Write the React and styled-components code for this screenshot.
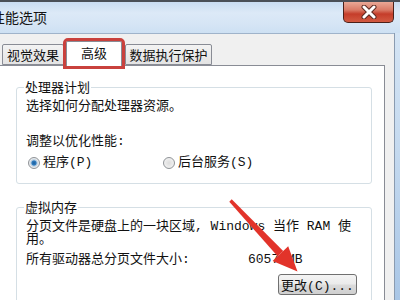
import React from 'react';
import styled, { createGlobalStyle } from 'styled-components';

const GlobalStyle = createGlobalStyle`
  html, body {
    margin: 0;
    padding: 0;
    background: #f0f0f0;
  }
  body {
    font-family: "Liberation Mono", "Noto Sans CJK SC", monospace;
    font-size: 13px;
    color: #111;
  }
`;

const App = () => {
  return (
    <Window>
      <GlobalStyle />
      <TitleBar>
        <Title>性能选项</Title>
        <CloseButton>
          <svg width="20" height="14" viewBox="0 0 20 14">
            <path
              d="M5 2 L15 12 M15 2 L5 12"
              stroke="#5b2a22"
              strokeWidth="5"
              strokeLinecap="round"
            />
            <path
              d="M5 2 L15 12 M15 2 L5 12"
              stroke="#ffffff"
              strokeWidth="3"
              strokeLinecap="round"
            />
          </svg>
        </CloseButton>
      </TitleBar>

      <Body>
        <Client>
          <TabRow>
            <Tab $width={62}>视觉效果</Tab>
            <Tab $width={56} $active>高级</Tab>
            <Tab $width={87} $gap={3}>数据执行保护</Tab>
          </TabRow>

          <Panel>
            <Group>
              <Legend>处理器计划</Legend>
              <Line $top={5}>选择如何分配处理器资源。</Line>
              <Line $top={20}>调整以优化性能:</Line>
              <RadioRow>
                <RadioItem $pad={2}>
                  <Radio $checked />
                  程序(P)
                </RadioItem>
                <RadioItem>
                  <Radio />
                  后台服务(S)
                </RadioItem>
              </RadioRow>
            </Group>

            <Group $top={16}>
              <Legend>虚拟内存</Legend>
              <Paragraph $top={6}>分页文件是硬盘上的一块区域, Windows 当作 RAM 使</Paragraph>
              <Paragraph>用。</Paragraph>
              <SizeRow>
                <span>所有驱动器总分页文件大小:</span>
                <span>6057 MB</span>
              </SizeRow>
              <ButtonRow>
                <Button>更改(C)...</Button>
              </ButtonRow>
            </Group>
          </Panel>
        </Client>
        <RightFrame />
      </Body>

      {/* red annotation arrow drawn over the dialog */}
      <Overlay width="400" height="300" viewBox="0 0 400 300">
        <polygon
          points="229.3,201.7 231.7,199.3 283.2,251 277.6,256.2"
          fill="#e2332a"
        />
        <polygon points="272.6,261 288.2,246.2 297.5,271.5" fill="#e2332a" />
      </Overlay>
    </Window>
  );
};

export default App;

const Window = styled.div`
  position: relative;
  width: 400px;
  height: 300px;
  display: flex;
  flex-direction: column;
  overflow: hidden;
  background: #cfe0f2;
`;

const TitleBar = styled.div`
  box-sizing: border-box;
  height: 33px;
  flex-shrink: 0;
  display: flex;
  justify-content: space-between;
  align-items: flex-start;
  border-top: 2px solid #4a4f57;
  background: linear-gradient(
    to bottom,
    #c9dcf1 0%,
    #dce9f7 35%,
    #d6e5f5 70%,
    #cde0f3 100%
  );
`;

const Title = styled.div`
  margin-left: -9px;
  margin-top: 7px;
  font-family: "Noto Sans CJK SC", sans-serif;
  font-size: 14px;
  line-height: 16px;
  color: #151515;
`;

const CloseButton = styled.div`
  box-sizing: border-box;
  width: 51px;
  height: 21px;
  margin-right: 6px;
  display: flex;
  align-items: center;
  justify-content: center;
  border: 1px solid #4b2019;
  border-top: none;
  border-radius: 0 0 5px 5px;
  background: linear-gradient(
    to bottom,
    #e9a896 0%,
    #d97a66 40%,
    #c53d2a 60%,
    #d25a42 100%
  );
`;

const Body = styled.div`
  flex: 1;
  display: flex;
  min-height: 0;
`;

const Client = styled.div`
  width: 394px;
  display: flex;
  flex-direction: column;
  background: #f0f0f0;
  border-top: 1px solid #9fb3ca;
`;

const RightFrame = styled.div`
  flex: 1;
  border-left: 1px solid #8a9bb0;
  background: linear-gradient(to bottom, #d4e4f4 0%, #c4d9ef 45%, #a9c6e6 100%);
`;

const TabRow = styled.div`
  display: flex;
  align-items: flex-end;
  height: 24px;
  margin-top: 7px;
  padding-left: 2px;
`;

const Tab = styled.div`
  position: relative;
  box-sizing: border-box;
  width: ${(p) => p.$width}px;
  height: ${(p) => (p.$active ? 25 : 21)}px;
  margin-left: ${(p) => (p.$active ? 2 : p.$gap || 0)}px;
  margin-bottom: ${(p) => (p.$active ? -1 : 0)}px;
  display: flex;
  align-items: center;
  justify-content: center;
  padding-bottom: ${(p) => (p.$active ? 3 : 0)}px;
  border: 1px solid #898c95;
  border-bottom: ${(p) => (p.$active ? 'none' : '1px solid #898c95')};
  border-radius: 2px 2px 0 0;
  background: ${(p) =>
    p.$active ? '#ffffff' : 'linear-gradient(to bottom, #f3f3f3, #e3e3e3)'};
  font-family: "Noto Sans CJK SC", sans-serif;
  font-size: 13px;
  white-space: nowrap;
  z-index: ${(p) => (p.$active ? 2 : 0)};
  outline: ${(p) => (p.$active ? '3px solid #c9413d' : 'none')};
`;

const Panel = styled.div`
  flex: 1;
  margin-left: -2px;
  margin-right: 9px;
  padding: 14px 12px 0 17px;
  background: #ffffff;
  border: 1px solid #898c95;
  border-bottom: none;
`;

const Group = styled.fieldset`
  margin: ${(p) => p.$top || 0}px 0 0 0;
  padding: 0 0 13px 9px;
  border: 1px solid #d5dfe5;
  border-radius: 3px;
  min-width: 0;
`;

const Legend = styled.legend`
  margin-left: -2px;
  padding: 0 1px;
  line-height: 14px;
  font-family: "Noto Sans CJK SC", sans-serif;
  font-size: 13px;
`;

const Line = styled.div`
  margin-top: ${(p) => p.$top}px;
  line-height: 15px;
`;

const RadioRow = styled.div`
  display: grid;
  grid-template-columns: 137px auto;
  margin-top: 6px;
  line-height: 15px;
`;

const RadioItem = styled.div`
  display: flex;
  align-items: center;
  gap: 3px;
  padding-left: ${(p) => p.$pad || 0}px;
`;

const Radio = styled.span`
  box-sizing: border-box;
  width: 12px;
  height: 12px;
  border-radius: 50%;
  border: 1px solid #8f9397;
  background: ${(p) =>
    p.$checked
      ? 'radial-gradient(circle, #1c5d98 0%, #2f7cc0 30%, #a9c5dd 42%, #e6e9ec 60%, #f4f4f4 100%)'
      : 'radial-gradient(circle, #dcdcdc 0%, #ececec 55%, #f7f7f7 100%)'};
`;

const Paragraph = styled.div`
  margin-top: ${(p) => p.$top || 0}px;
  height: 13px;
  line-height: 13px;
  white-space: nowrap;
`;

const SizeRow = styled.div`
  display: grid;
  grid-template-columns: 222px auto;
  margin-top: 7px;
  line-height: 13px;
`;

const ButtonRow = styled.div`
  display: flex;
  justify-content: flex-end;
  margin-top: 8px;
  padding-right: 14px;
`;

const Button = styled.div`
  box-sizing: border-box;
  width: 79px;
  height: 21px;
  display: flex;
  align-items: center;
  justify-content: center;
  border: 1px solid #707070;
  border-radius: 3px;
  background: linear-gradient(
    to bottom,
    #f4f4f4 0%,
    #ebebeb 48%,
    #dcdcdc 52%,
    #cfcfcf 100%
  );
  white-space: nowrap;
`;

const Overlay = styled.svg`
  position: absolute;
  left: 0;
  top: 0;
  pointer-events: none;
`;
